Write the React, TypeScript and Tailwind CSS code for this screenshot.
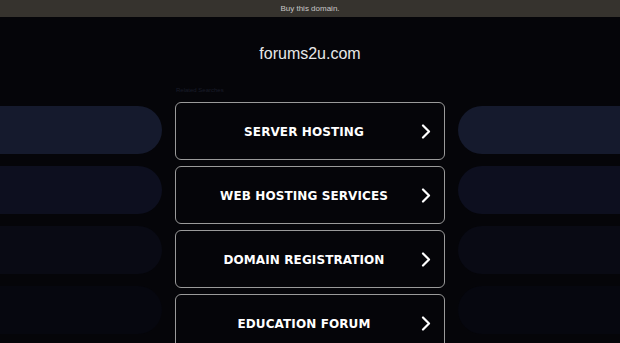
import React from 'react';

const items = ['SERVER HOSTING', 'WEB HOSTING SERVICES', 'DOMAIN REGISTRATION', 'EDUCATION FORUM'];
const pillColors = ['bg-[#151a2d]', 'bg-[#0d0f1f]', 'bg-[#090a14]', 'bg-[#06070f]'];

const Chevron = () => (
  <svg width="10" height="15" viewBox="0 0 10 15" fill="none">
    <path d="M2 1.5 L8 7.5 L2 13.5" stroke="#ffffff" strokeWidth="2.2" strokeLinecap="round" strokeLinejoin="round" />
  </svg>
);

const App = () => {
  return (
    <div className="h-[343px] w-full overflow-hidden bg-[#050509]" style={{ fontFamily: '"Liberation Sans", Arial, sans-serif' }}>
      <div className="flex h-[17px] items-center justify-center bg-[#36332e] text-[8px] text-[#c8c8c8]">
        Buy this domain.
      </div>

      <div className="flex h-[45px] items-end justify-center">
        <h1 className="text-[16px] leading-none text-[#e8e8e8]">forums2u.com</h1>
      </div>

      <div className="mt-[25px] grid grid-cols-[1fr_270px_1fr]">
        <div className="flex flex-col gap-[12px] pr-[13px] pt-[19px]">
          {pillColors.map((c) => (
            <div key={c} className={`h-[48px] w-full rounded-r-full ${c}`} />
          ))}
        </div>

        <div className="flex flex-col">
          <div className="mb-[9px] h-[6px] pl-[1px] text-[6px] leading-none text-[#1a1d2a]">Related Searches</div>
          <div className="flex flex-col gap-[6px]">
            {items.map((t) => (
              <div
                key={t}
                className="relative flex h-[58px] items-center justify-center rounded-[6px] border-[1.5px] border-[#9a9a9a] bg-[#050509] pr-[12px] pt-[2px]"
              >
                <span
                  className="text-[12px] font-bold tracking-[0.1px] text-white"
                  style={{ fontFamily: '"DejaVu Sans", Verdana, sans-serif' }}
                >
                  {t}
                </span>
                <div className="absolute right-[13px] top-[21px]">
                  <Chevron />
                </div>
              </div>
            ))}
          </div>
        </div>

        <div className="flex flex-col gap-[12px] pl-[13px] pt-[19px]">
          {pillColors.map((c) => (
            <div key={c} className={`h-[48px] w-full rounded-l-full ${c}`} />
          ))}
        </div>
      </div>
    </div>
  );
};

export default App;
